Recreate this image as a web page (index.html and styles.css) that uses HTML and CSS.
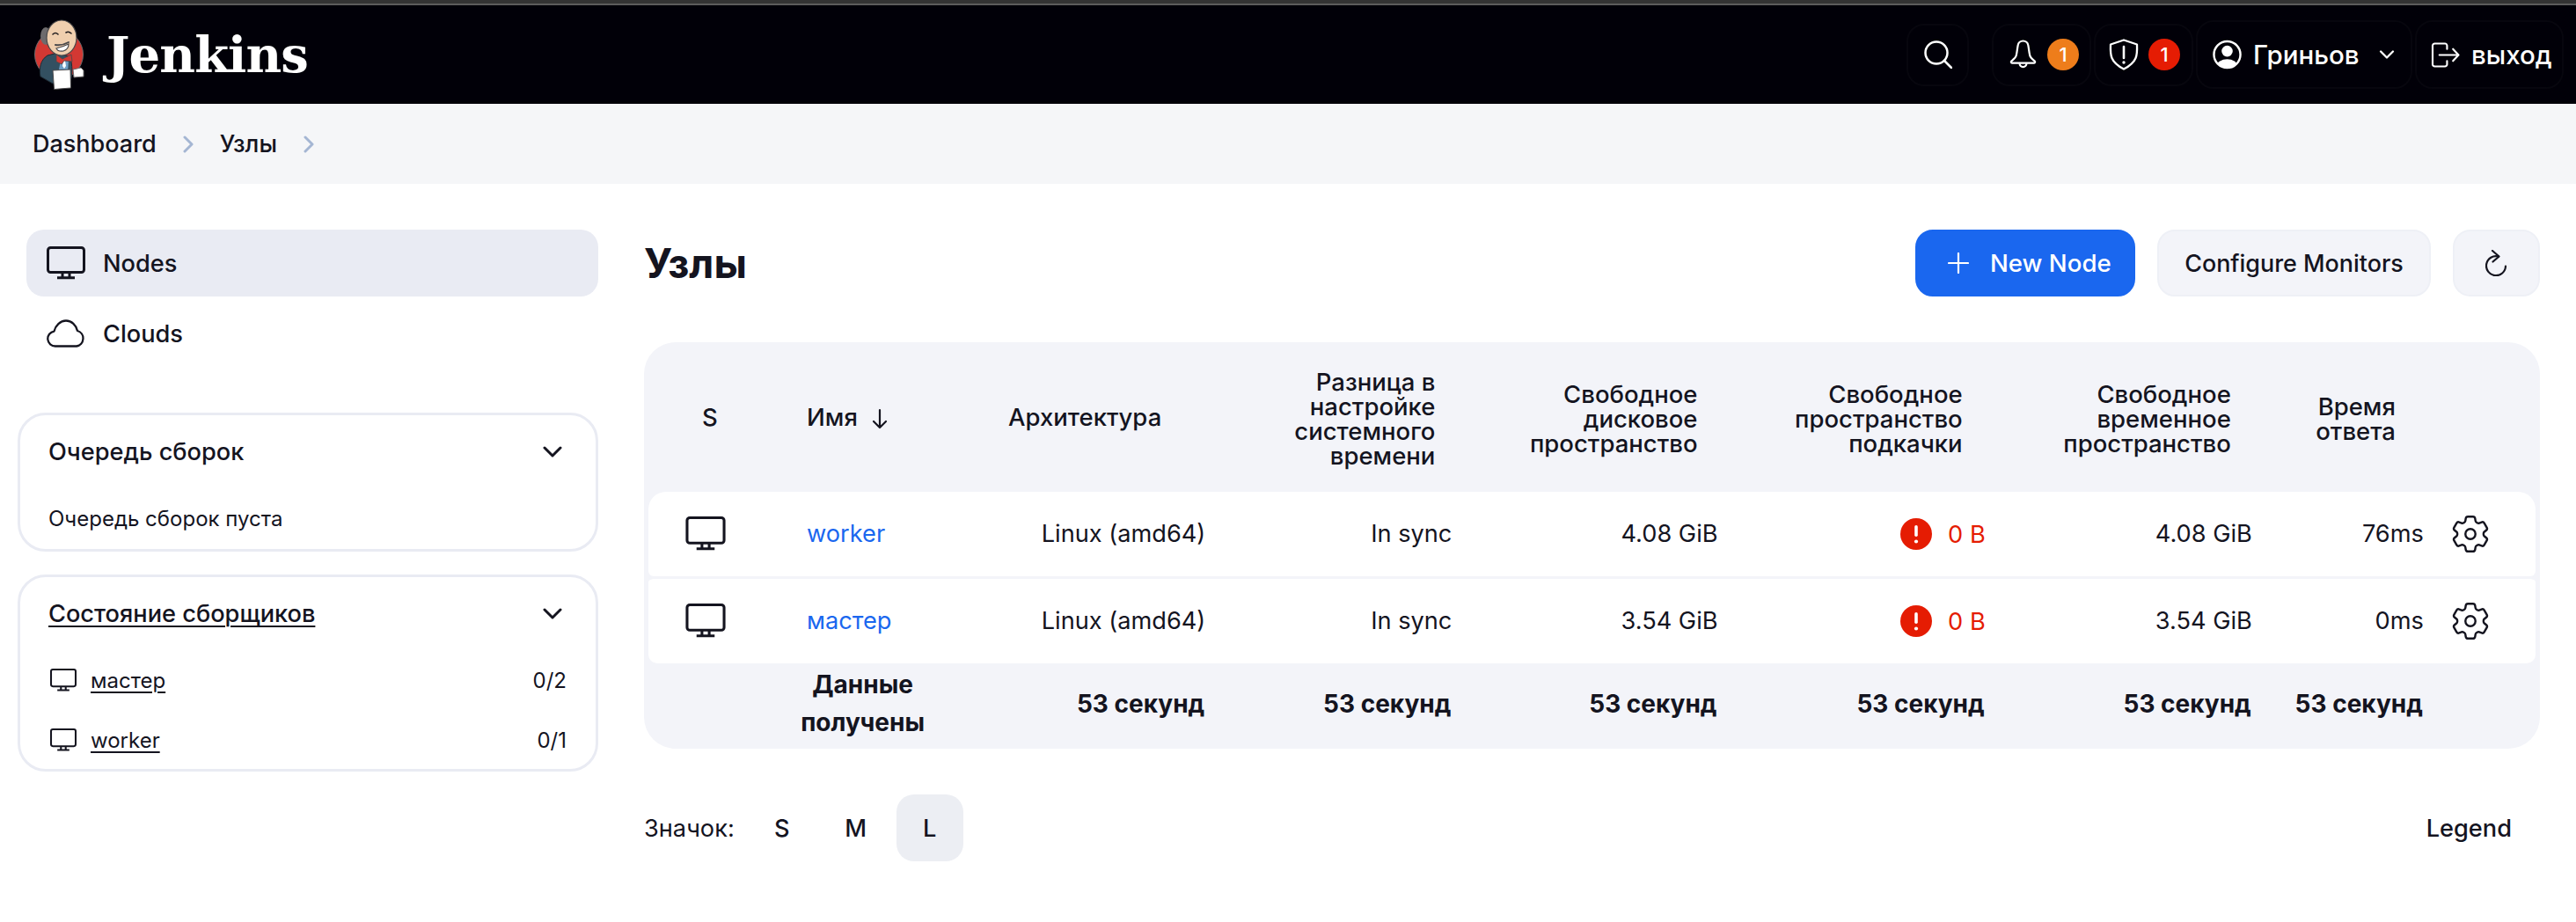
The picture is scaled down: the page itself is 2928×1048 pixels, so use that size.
FILE: index.html
```html
<!DOCTYPE html>
<html lang="ru">
<head>
  <meta charset="UTF-8" />
  <title>Узлы - Jenkins</title>
  <link rel="stylesheet" href="styles.css">
</head>
<body>
  <svg class="icon-defs" aria-hidden="true">
    <symbol id="i-computer" viewBox="0 0 44 38">
      <rect x="1.5" y="1.5" width="41" height="28" rx="3" fill="none" stroke="currentColor" stroke-width="3"/>
      <path d="M18 30v5M26 30v5M12 35.8h20" fill="none" stroke="currentColor" stroke-width="3"/>
    </symbol>
    <symbol id="i-gear" viewBox="2 2 20 20">
      <path fill="none" stroke="currentColor" stroke-width="1.1" stroke-linejoin="round" d="M9.594 3.94c.09-.542.56-.94 1.11-.94h2.593c.55 0 1.02.398 1.11.94l.213 1.281c.063.374.313.686.645.87.074.04.147.083.22.127.325.196.72.257 1.075.124l1.217-.456a1.125 1.125 0 0 1 1.37.49l1.296 2.247a1.125 1.125 0 0 1-.26 1.431l-1.003.827c-.293.241-.438.613-.43.992a7.723 7.723 0 0 1 0 .255c-.008.378.137.75.43.991l1.004.827c.424.35.534.955.26 1.43l-1.298 2.247a1.125 1.125 0 0 1-1.369.491l-1.217-.456c-.355-.133-.75-.072-1.076.124a6.47 6.47 0 0 1-.22.128c-.331.183-.581.495-.644.869l-.213 1.281c-.09.543-.56.94-1.11.94h-2.594c-.55 0-1.019-.398-1.11-.94l-.213-1.281c-.062-.374-.312-.686-.644-.87a6.52 6.52 0 0 1-.22-.127c-.325-.196-.72-.257-1.076-.124l-1.217.456a1.125 1.125 0 0 1-1.369-.49l-1.297-2.247a1.125 1.125 0 0 1 .26-1.431l1.004-.827c.292-.24.437-.613.43-.991a6.932 6.932 0 0 1 0-.255c.007-.38-.138-.751-.43-.992l-1.004-.827a1.125 1.125 0 0 1-.26-1.43l1.297-2.247a1.125 1.125 0 0 1 1.37-.491l1.216.456c.356.133.751.072 1.076-.124.072-.044.146-.086.22-.128.332-.183.582-.495.644-.869l.214-1.28Z"/>
      <circle cx="12" cy="12" r="2.6" fill="none" stroke="currentColor" stroke-width="1.1"/>
    </symbol>
    <symbol id="i-error" viewBox="0 0 36 36">
      <circle cx="18" cy="18" r="18" fill="#e51c03"/>
      <rect x="16.2" y="8" width="3.6" height="13" rx="1.8" fill="#fff"/>
      <circle cx="18" cy="26.5" r="2.1" fill="#fff"/>
    </symbol>
    <symbol id="i-chevron" viewBox="0 0 22 13">
      <path d="M2 2l9 9 9-9" fill="none" stroke="currentColor" stroke-width="3" stroke-linecap="round" stroke-linejoin="round"/>
    </symbol>
    <symbol id="i-crumb" viewBox="0 0 12 20">
      <path d="M2 2l8 8-8 8" fill="none" stroke="currentColor" stroke-width="3" stroke-linecap="round" stroke-linejoin="round"/>
    </symbol>
  </svg>

  <div class="window-strip"></div>

  <header class="topbar">
    <a class="brand" href="#">
      <svg class="brand-logo" viewBox="0 0 57 80">
        <circle cx="28" cy="40" r="27.5" fill="#d33833" stroke="#6d6b6d" stroke-width="1"/>
        <path d="M7 65c-2-9 0-19 8-24l12-3 14 5c2 9 3 19 0 27l-20 3z" fill="#335061" stroke="#1d2a33" stroke-width="1"/>
        <path d="M30 46l9 0-1 14-5 3-5-6z" fill="#6d9ec4"/>
        <path d="M33 47l2 0 1 6-2 3-2-3z" fill="#fff"/>
        <ellipse cx="13" cy="19" rx="6" ry="10" fill="#6d6b6d"/>
        <ellipse cx="31" cy="21" rx="17" ry="20" fill="#f0cfae" stroke="#49484a" stroke-width="1.2"/>
        <path d="M21 17q3-3 6 0M36 15q3-2 6 1" fill="none" stroke="#231f20" stroke-width="1.6" stroke-linecap="round"/>
        <path d="M24 29q8 1 15-3" fill="none" stroke="#49484a" stroke-width="2" stroke-linecap="round"/>
        <path d="M25 33q8-2 14-5q0 6-6 8q-6 1-8-3z" fill="#fff" stroke="#49484a" stroke-width="1.2"/>
        <path d="M25 40l7 5 10-5 1 8-9-1-3 4-6-3z" fill="#d33833" stroke="#49484a" stroke-width=".8"/>
        <path d="M21 58l20-1 .5 21-19 1.500z" fill="#fff" stroke="#49484a" stroke-width="1"/>
        <path d="M44 57l9-2 3 3v7l-11 1z" fill="#fff" stroke="#6d6b6d" stroke-width="1"/>
      </svg>
      <span class="brand-name">Jenkins</span>
    </a>
    <nav class="top-actions">
      <a class="top-btn top-btn-search" href="#">
        <svg class="top-icon" viewBox="0 0 32 32" width="32" height="32"><circle cx="14" cy="14" r="12.500" fill="none" stroke="currentColor" stroke-width="2.500"/><path d="M23 23l8 8" stroke="currentColor" stroke-width="2.500" stroke-linecap="round"/></svg>
      </a>
      <a class="top-btn top-btn-alert top-btn-bell" href="#">
        <svg viewBox="0 0 32 36" width="31" height="36"><path d="M16 2c-3 0-5.500 2.200-6 5-.8 4-1 8-2 12-.6 2.400-3 4.500-5.500 6.500-1 .8-.5 2.500 1 2.500h25c1.500 0 2-1.700 1-2.500-2.500-2-5-4-5.500-6.500-1-4-1.200-8-2-12-.5-2.800-3-5-6-5z" fill="none" stroke="currentColor" stroke-width="2.300" stroke-linejoin="round"/><path d="M12 28.500a4 4 0 0 0 8 0" fill="none" stroke="currentColor" stroke-width="2.300"/></svg>
        <span class="count count-warn">1</span>
      </a>
      <a class="top-btn top-btn-alert top-btn-shield" href="#">
        <svg viewBox="0 0 34 36" width="34" height="36"><path d="M17 1.500l15 5c.5 12 .5 20-15 28-15.500-8-15.500-16-15-28z" fill="none" stroke="currentColor" stroke-width="2.300" stroke-linejoin="round"/><path d="M17 9v13" stroke="currentColor" stroke-width="2.600" stroke-linecap="round"/><circle cx="17" cy="27" r="1.700" fill="currentColor"/></svg>
        <span class="count count-danger">1</span>
      </a>
      <a class="top-btn top-btn-text top-btn-user" href="#">
        <svg viewBox="0 0 34 34" width="33" height="34"><defs><clipPath id="user-clip"><circle cx="17" cy="17" r="15.500"/></clipPath></defs><circle cx="17" cy="17" r="15.500" fill="none" stroke="currentColor" stroke-width="2.500"/><circle cx="17" cy="13" r="6.500" fill="currentColor"/><ellipse cx="17" cy="30" rx="12" ry="7.500" fill="currentColor" clip-path="url(#user-clip)"/></svg>
        <span>Гриньов</span>
        <svg class="user-chevron" width="18" height="10"><use href="#i-chevron"/></svg>
      </a>
      <a class="top-btn top-btn-text top-btn-exit" href="#">
        <svg viewBox="0 0 34 30" width="33" height="29"><path d="M19 8V4a2.500 2.500 0 0 0-2.500-2.500h-12A2.500 2.500 0 0 0 2 4v22a2.500 2.500 0 0 0 2.500 2.500h12A2.500 2.500 0 0 0 19 26v-4" fill="none" stroke="currentColor" stroke-width="2.200" stroke-linecap="round"/><path d="M10 15h22M26 8l6.500 7-6.500 7" fill="none" stroke="currentColor" stroke-width="2.200" stroke-linecap="round" stroke-linejoin="round"/></svg>
        <span>выход</span>
      </a>
    </nav>
  </header>

  <nav class="breadcrumbs">
    <a href="#">Dashboard</a>
    <svg class="crumb-sep" width="12" height="20"><use href="#i-crumb"/></svg>
    <a href="#">Узлы</a>
    <svg class="crumb-sep" width="12" height="20"><use href="#i-crumb"/></svg>
  </nav>

  <div class="page">
    <aside class="sidebar">
      <div class="side-tasks">
        <a class="task task-active" href="#">
          <svg class="task-icon" width="44" height="38"><use href="#i-computer"/></svg>
          <span>Nodes</span>
        </a>
        <a class="task" href="#">
          <svg class="task-icon" viewBox="0 0 44 32" width="44" height="32"><path d="M10 30.500a8.500 8.500 0 0 1-1.500-16.900C10 7 15.500 1.500 22 1.500c6.500 0 11.500 5 13 11.500a9 9 0 0 1-1 17.500z" fill="none" stroke="currentColor" stroke-width="2.300" stroke-linejoin="round"/></svg>
          <span>Clouds</span>
        </a>
      </div>

      <section class="pane pane-queue">
        <div class="pane-head">
          <span>Очередь сборок</span>
          <svg class="pane-chevron" width="22" height="13"><use href="#i-chevron"/></svg>
        </div>
        <div class="pane-note">Очередь сборок пуста</div>
      </section>

      <section class="pane pane-executors">
        <div class="pane-head">
          <a href="#">Состояние сборщиков</a>
          <svg class="pane-chevron" width="22" height="13"><use href="#i-chevron"/></svg>
        </div>
        <div class="pane-row">
          <svg class="pane-icon" width="30" height="26"><use href="#i-computer"/></svg>
          <a href="#">мастер</a>
          <span class="pane-count">0/2</span>
        </div>
        <div class="pane-row">
          <svg class="pane-icon" width="30" height="26"><use href="#i-computer"/></svg>
          <a href="#">worker</a>
          <span class="pane-count">0/1</span>
        </div>
      </section>
    </aside>

    <main class="content">
      <div class="title-row">
        <h1>Узлы</h1>
        <div class="title-actions">
          <a class="btn btn-primary" href="#">
            <svg width="24" height="24" viewBox="0 0 24 24"><path d="M12 1v22M1 12h22" stroke="currentColor" stroke-width="2.200" stroke-linecap="round"/></svg>
            <span>New Node</span>
          </a>
          <a class="btn btn-monitors" href="#">Configure Monitors</a>
          <a class="btn btn-icon" href="#">
            <svg width="26" height="30" viewBox="0 0 26 30"><path d="M15 7.600A11 11 0 1 0 23 18.500" fill="none" stroke="currentColor" stroke-width="2.200" stroke-linecap="round"/><path d="M8 1l7.500 6.500-7 6" fill="none" stroke="currentColor" stroke-width="2.200" stroke-linecap="round" stroke-linejoin="round"/></svg>
          </a>
        </div>
      </div>

      <div class="table-wrap">
        <table class="nodes">
          <colgroup>
            <col class="c-status"><col class="c-name"><col class="c-arch"><col class="c-clock">
            <col class="c-disk"><col class="c-swap"><col class="c-temp"><col class="c-resp"><col class="c-gear">
          </colgroup>
          <thead>
            <tr>
              <th class="th-status">S</th>
              <th class="th-name">Имя <svg class="sort-arrow" width="18" height="24" viewBox="0 0 18 24"><path d="M9 2v20M2 15l7 7 7-7" fill="none" stroke="currentColor" stroke-width="2.200" stroke-linecap="round" stroke-linejoin="round"/></svg></th>
              <th class="th-arch">Архитектура</th>
              <th class="th-clock">Разница в<br>настройке<br>системного<br>времени</th>
              <th class="th-disk">Свободное<br>дисковое<br>пространство</th>
              <th class="th-swap">Свободное<br>пространство<br>подкачки</th>
              <th class="th-temp">Свободное<br>временное<br>пространство</th>
              <th class="th-resp">Время<br>ответа</th>
              <th></th>
            </tr>
          </thead>
          <tbody>
            <tr>
              <td class="cell-status"><svg width="46" height="39"><use href="#i-computer"/></svg></td>
              <td class="cell-name"><a href="#">worker</a></td>
              <td>Linux (amd64)</td>
              <td>In sync</td>
              <td>4.08 GiB</td>
              <td class="cell-error"><span class="error-val"><svg width="36" height="36"><use href="#i-error"/></svg>0 B</span></td>
              <td>4.08 GiB</td>
              <td>76ms</td>
              <td class="cell-gear"><svg width="44" height="44"><use href="#i-gear"/></svg></td>
            </tr>
            <tr>
              <td class="cell-status"><svg width="46" height="39"><use href="#i-computer"/></svg></td>
              <td class="cell-name"><a href="#">мастер</a></td>
              <td>Linux (amd64)</td>
              <td>In sync</td>
              <td>3.54 GiB</td>
              <td class="cell-error"><span class="error-val"><svg width="36" height="36"><use href="#i-error"/></svg>0 B</span></td>
              <td>3.54 GiB</td>
              <td>0ms</td>
              <td class="cell-gear"><svg width="44" height="44"><use href="#i-gear"/></svg></td>
            </tr>
          </tbody>
          <tfoot>
            <tr>
              <td></td>
              <td class="foot-label">Данные получены</td>
              <td>53 секунд</td>
              <td>53 секунд</td>
              <td>53 секунд</td>
              <td>53 секунд</td>
              <td>53 секунд</td>
              <td>53 секунд</td>
              <td></td>
            </tr>
          </tfoot>
        </table>
      </div>

      <div class="table-bottom">
        <span class="size-label">Значок:</span>
        <a class="size-btn" href="#">S</a>
        <a class="size-btn" href="#">M</a>
        <a class="size-btn size-btn-active" href="#">L</a>
        <a class="legend" href="#">Legend</a>
      </div>
    </main>
  </div>
</body>
</html>
```
FILE: styles.css
```css
* {
  box-sizing: border-box;
}
html,
body {
  margin: 0;
  height: 1048px;
  overflow: hidden;
}
body {
  font-family: Inter, "Noto Sans", sans-serif;
  font-size: 27.2px;
  font-weight: 400;
  color: #14141f;
  background: #fff;
}
a {
  color: inherit;
  text-decoration: none;
}
svg {
  flex: none;
}
.icon-defs {
  display: none;
}

.window-strip {
  height: 6px;
  background: #333;
  border-bottom: 2px solid #5c5c5c;
}

/* top bar */
.topbar {
  height: 112px;
  background: #010008;
  color: #fff;
  display: flex;
  align-items: center;
  justify-content: space-between;
  padding: 0 14px 0 39px;
}
.brand {
  display: flex;
  align-items: center;
  gap: 25px;
}
.brand-logo {
  width: 57px;
  height: 80px;
}
.brand-name {
  font-family: "DejaVu Serif", "Liberation Serif", serif;
  font-weight: 700;
  font-size: 56px;
  letter-spacing: -0.9px;
  line-height: 1;
}
.top-actions {
  display: flex;
  align-items: center;
  gap: 3px;
}
.top-btn {
  height: 71px;
  display: flex;
  align-items: center;
  border: 2px solid #07060e;
  border-radius: 20px;
  font-weight: 500;
  font-size: 29.5px;
}
.top-btn-search {
  width: 71px;
  margin-right: 23px;
  justify-content: center;
}
.top-btn-alert {
  width: 113px;
}
.top-btn-bell {
  padding-left: 18px;
  gap: 12px;
}
.top-btn-shield {
  padding-left: 15px;
  gap: 11px;
}
.top-btn-text {
  height: 78px;
  gap: 13px;
}
.top-btn-user {
  width: 246px;
  padding-left: 17px;
}
.top-btn-exit {
  width: 169px;
  padding-left: 16px;
}
.user-chevron {
  margin-left: 9px;
}
.count {
  width: 36px;
  height: 36px;
  border-radius: 50%;
  display: flex;
  align-items: center;
  justify-content: center;
  font-size: 22px;
  font-weight: 500;
}
.count-warn {
  background: #ee7d1b;
}
.count-danger {
  background: #e51c03;
}

/* breadcrumbs */
.breadcrumbs {
  height: 91px;
  background: #f5f6f8;
  display: flex;
  align-items: center;
  padding-left: 37px;
  gap: 30px;
  font-size: 27px;
  font-weight: 450;
}
.crumb-sep {
  color: #a4b6d3;
}

.page {
  display: flex;
  gap: 52px;
  padding: 52px 41px 0 20px;
}

/* sidebar */
.sidebar {
  width: 660px;
  flex: none;
}
.side-tasks {
  display: flex;
  flex-direction: column;
  gap: 4px;
  margin: 0 0 52px 10px;
}
.task {
  height: 76px;
  display: flex;
  align-items: center;
  gap: 20px;
  padding-left: 23px;
  border-radius: 20px;
  font-weight: 450;
}
.task-active {
  background: #e9ebf3;
}
.pane {
  border: 3px solid #e9ebf3;
  border-radius: 32px;
  padding: 0 33px 0 32px;
}
.pane-queue {
  height: 158px;
  margin-bottom: 26px;
}
.pane-executors {
  height: 224px;
}
.pane-head {
  height: 83px;
  display: flex;
  align-items: center;
  justify-content: space-between;
  font-weight: 450;
}
.pane-head a {
  text-decoration: underline;
  text-underline-offset: 4px;
  text-decoration-thickness: 2px;
}
.pane-chevron {
  margin-right: 5px;
}
.pane-note {
  margin-top: 20px;
  font-size: 24px;
}
.pane-row {
  display: flex;
  align-items: center;
  gap: 16px;
  height: 68px;
  font-size: 24px;
}
.pane-row a {
  text-decoration: underline;
  text-underline-offset: 4px;
  text-decoration-thickness: 2px;
}
.pane-icon {
  margin-left: 2px;
}
.pane-count {
  margin-left: auto;
}

/* main */
.content {
  flex: 1;
  min-width: 0;
}
.title-row {
  height: 76px;
  display: flex;
  align-items: center;
  justify-content: space-between;
  margin-bottom: 52px;
}
h1 {
  margin: 0;
  font-size: 46.5px;
  font-weight: 700;
}
.title-actions {
  display: flex;
  gap: 25px;
}
.btn {
  height: 76px;
  display: flex;
  align-items: center;
  background: #f3f4f9;
  border: 2px solid #eef0f6;
  border-radius: 20px;
  font-size: 26.9px;
  font-weight: 450;
}
.btn-primary {
  width: 250px;
  padding-left: 35px;
  gap: 24px;
  font-size: 27.6px;
  color: #fff;
  background: #1a67ef;
  border-color: #1a67ef;
}
.btn-monitors {
  width: 311px;
  justify-content: center;
}
.btn-icon {
  width: 99px;
  justify-content: center;
}

/* nodes table */
.table-wrap {
  background: #f3f4f9;
  border-radius: 36px;
  padding: 0 5px;
}
.nodes {
  width: 100%;
  table-layout: fixed;
  border-collapse: separate;
  border-spacing: 0;
}
.c-status { width: 160px; }
.c-name { width: 167px; }
.c-arch { width: 326px; }
.c-clock { width: 280px; }
.c-disk { width: 302px; }
.c-swap { width: 304px; }
.c-temp { width: 303px; }
.c-resp { width: 195px; }
.c-gear { width: 107px; }
.nodes th {
  height: 170px;
  padding: 3px 0 0;
  text-align: right;
  font-weight: 450;
  font-size: 27.5px;
  line-height: 28px;
}
.nodes th.th-status {
  text-align: left;
  padding: 0 0 0 61px;
}
.nodes th.th-name {
  text-align: left;
  padding: 0 0 0 20px;
  white-space: nowrap;
}
.sort-arrow {
  vertical-align: middle;
  margin-left: 9px;
}
.nodes th.th-arch { padding: 0 70px 0 0; }
.nodes th.th-clock { padding-right: 39px; }
.nodes th.th-disk { padding-right: 43px; }
.nodes th.th-swap { padding-right: 46px; }
.nodes th.th-temp { padding-right: 44px; }
.nodes th.th-resp { padding-right: 52px; }
.nodes td {
  padding: 0 20px 2px 0;
  text-align: right;
  background: #fff;
  height: 96px;
}
.nodes tbody tr + tr td {
  height: 99px;
  border-top: 3px solid #f3f4f9;
  background-clip: padding-box;
}
.nodes tbody tr:first-child td:first-child { border-radius: 20px 0 0 6px; }
.nodes tbody tr:first-child td:last-child { border-radius: 0 20px 6px 0; }
.nodes tbody tr:last-child td:first-child { border-radius: 6px 0 0 10px; }
.nodes tbody tr:last-child td:last-child { border-radius: 0 6px 10px 0; }
.nodes td.cell-status {
  text-align: left;
  padding: 0 0 2px 42px;
}
.nodes td.cell-name {
  text-align: left;
  padding-left: 20px;
}
.cell-name a {
  color: #1a67ef;
}
.cell-status svg,
.cell-gear svg {
  display: block;
}
.nodes td.cell-gear {
  padding: 0 0 0 11px;
}
.nodes td.cell-error {
  color: #e51c03;
  padding-bottom: 0;
}
.error-val {
  display: inline-flex;
  align-items: center;
  gap: 18px;
  vertical-align: middle;
}
.nodes tfoot td {
  height: 97px;
  padding: 0 21px 5px 0;
  background: none;
  font-size: 28px;
  font-weight: 700;
  line-height: 43px;
}
.nodes tfoot td.foot-label {
  padding: 0 0 5px;
  text-align: center;
}

/* below the table */
.table-bottom {
  display: flex;
  align-items: center;
  gap: 8px;
  margin-top: 52px;
}
.size-label {
  margin-right: 8px;
}
.size-btn {
  width: 76px;
  height: 76px;
  display: flex;
  align-items: center;
  justify-content: center;
  border-radius: 20px;
  font-weight: 450;
}
.size-btn-active {
  background: #eceef3;
}
.legend {
  margin-left: auto;
  margin-right: 32px;
  font-weight: 450;
}
```
